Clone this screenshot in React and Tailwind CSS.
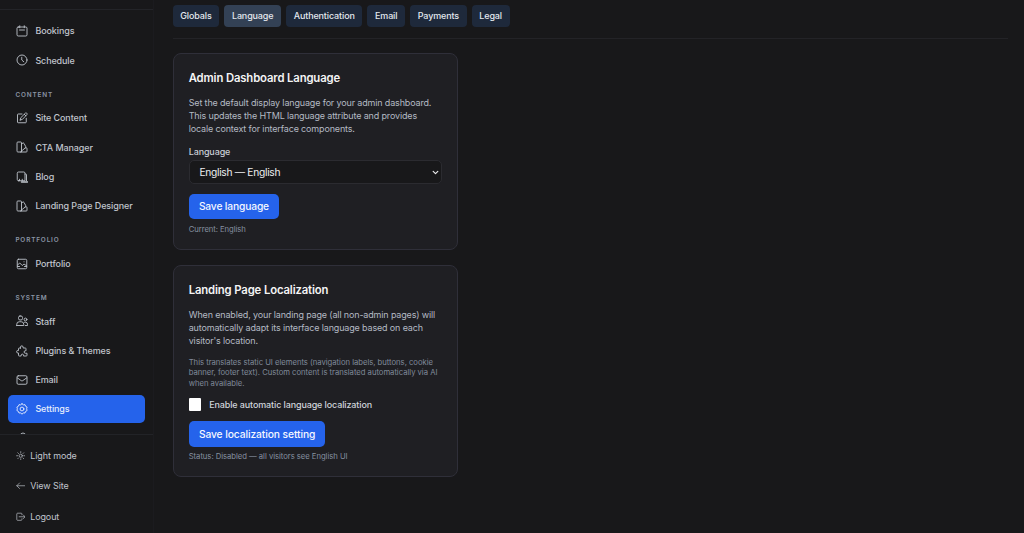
import React, { useState } from 'react';

// Shared wrapper for the line icons
const Icon = ({ children, className = 'size-[12px]', strokeWidth = 1.8 }) => (
  <svg
    viewBox="0 0 24 24"
    fill="none"
    stroke="currentColor"
    strokeWidth={strokeWidth}
    strokeLinecap="round"
    strokeLinejoin="round"
    className={`shrink-0 ${className}`}
  >
    {children}
  </svg>
);

const icons = {
  calendar: (
    <>
      <rect x="2" y="4" width="20" height="18" rx="2.5" />
      <path d="M7.5 1.5v4M16.5 1.5v4M7 10h10" />
    </>
  ),
  clock: (
    <>
      <circle cx="12" cy="12" r="10" />
      <path d="M11.5 6.5V12l4 3.5" />
    </>
  ),
  edit: (
    <>
      <path d="M12 4H4.5A1.5 1.5 0 0 0 3 5.5V20a1.5 1.5 0 0 0 1.5 1.5H19a1.5 1.5 0 0 0 1.5-1.5v-7.5" />
      <path d="m8.5 16 1-4.5L18.8 2.3a1.8 1.8 0 0 1 2.6 0l.4.4a1.8 1.8 0 0 1 0 2.6L12.8 14.8 8.5 16ZM16.5 4.5l3.2 3.2" />
    </>
  ),
  swatch: (
    <>
      <path d="M2 3.5A1.5 1.5 0 0 1 3.5 2h6A1.5 1.5 0 0 1 11 3.5V22H3.500A1.500 1.500 0 0 1 2 20.500Z" />
      <path d="M11 5.500 14 4.200a1.500 1.500 0 0 1 2 .6l3.600 6.700a1.500 1.500 0 0 1-.6 2L11 20" />
      <path d="M18.500 13.700h2A1.500 1.500 0 0 1 22 15.200v5.300a1.500 1.500 0 0 1-1.500 1.500H9" />
    </>
  ),
  blog: (
    <>
      <path d="M5 19.5A2.5 2.5 0 0 1 2.5 17V4.500A2.500 2.500 0 0 1 5 2h10.500A2.500 2.500 0 0 1 18 4.500v15H5Z" />
      <path d="M18 6h1.500A1.500 1.500 0 0 1 21 7.500v12M7 19.500v-3M12.500 19.500v-3" />
      <path d="M11 21.800h12" strokeWidth="3" />
    </>
  ),
  image: (
    <>
      <rect x="2.5" y="2.500" width="19" height="19" rx="2.500" />
      <path d="m3 14 4.500-4 5 5 3.500-3 5.500 4M16 7.500h.1M3 17h4M17 17h4" />
    </>
  ),
  users: (
    <>
      <rect x="5" y="2" width="8" height="8" rx="3" />
      <path d="M1.5 21v-2.500a5 5 0 0 1 5-5h4a5 5 0 0 1 5 5V21h-14Z" />
      <circle cx="19" cy="9" r="2.800" />
      <path d="M17 14.500h2a4 4 0 0 1 4 4V21h-4.500" />
    </>
  ),
  puzzle: (
    <path d="M9 6V4.300a2.600 2.600 0 0 1 5.200 0V6h4.300A1.500 1.500 0 0 1 20 7.500v4h-1.300a2.500 2.500 0 0 0 0 5H22V20.500a1.500 1.500 0 0 1-1.500 1.500H15v-1.500a2.300 2.300 0 0 0-4.600 0V22H6.500A1.500 1.500 0 0 1 5 20.500V16H3.700a2.500 2.500 0 0 1 0-5H5V7.500A1.500 1.500 0 0 1 6.500 6H9Z" />
  ),
  mail: (
    <>
      <rect x="2" y="3.500" width="20" height="17" rx="2.500" />
      <path d="m3 8 7.500 5.300a2.500 2.500 0 0 0 3 0L21 8" />
    </>
  ),
  cog: (
    <>
      <path d="m12 1.500 2.600 2.200 3.400-.4 1.200 3.200 3 1.600-.9 3.400.9 3.600-3 1.700-1.200 3.200-3.400-.3L12 22.500l-2.600-2.800-3.400.3-1.200-3.200-3-1.700.9-3.600-.9-3.400 3-1.600L6 3.300l3.400.4L12 1.500Z" />
      <circle cx="12" cy="12" r="3.800" />
    </>
  ),
  support: (
    <>
      <circle cx="14" cy="7" r="5" />
      <path d="M5 22a9 7 0 0 1 18 0" />
    </>
  ),
  sun: (
    <>
      <circle cx="12" cy="12" r="4" />
      <path d="M12 1.500v3M12 19.500v3M1.500 12h3M19.500 12h3M4.500 4.500l2 2M17.500 17.500l2 2M4.500 19.500l2-2M17.500 6.500l2-2" />
    </>
  ),
  back: <path d="M23 12H2M9 5l-7 7 7 7" />,
  logout: (
    <>
      <path d="M15 7V5a2 2 0 0 0-2-2H4a2 2 0 0 0-2 2v14a2 2 0 0 0 2 2h9a2 2 0 0 0 2-2v-2" />
      <path d="M8 12h15M18.500 7.500 23 12l-4.500 4.500" />
    </>
  ),
};

const navGroups = [
  {
    items: [
      { label: 'Bookings', icon: 'calendar' },
      { label: 'Schedule', icon: 'clock' },
    ],
  },
  {
    title: 'CONTENT',
    items: [
      { label: 'Site Content', icon: 'edit' },
      { label: 'CTA Manager', icon: 'swatch' },
      { label: 'Blog', icon: 'blog' },
      { label: 'Landing Page Designer', icon: 'swatch' },
    ],
  },
  { title: 'PORTFOLIO', items: [{ label: 'Portfolio', icon: 'image' }] },
  {
    title: 'SYSTEM',
    items: [
      { label: 'Staff', icon: 'users' },
      { label: 'Plugins & Themes', icon: 'puzzle' },
      { label: 'Email', icon: 'mail' },
      { label: 'Settings', icon: 'cog' },
      { label: '', icon: 'support' },
    ],
  },
];

const footerLinks = [
  { label: 'Light mode', icon: 'sun' },
  { label: 'View Site', icon: 'back' },
  { label: 'Logout', icon: 'logout' },
];

const tabs = ['Globals', 'Language', 'Authentication', 'Email', 'Payments', 'Legal'];

const Sidebar = () => (
  <aside className="flex h-full w-[154px] shrink-0 flex-col border-r border-[#1b1b1f]">
    <div className="h-[10px] shrink-0 border-b border-[#232428]" />
    <nav className="h-[424px] shrink-0 overflow-hidden px-[8px] pt-[7.200px]">
      {navGroups.map((group, i) => (
        <div key={i}>
          {group.title && (
            <h3 className="mb-[4px] pt-[15.500px] pl-[7.400px] text-[6.400px] leading-[10.200px] font-semibold tracking-[0.860px] text-[#8b95a5]">
              {group.title}
            </h3>
          )}
          <div className="flex flex-col gap-[1.250px]">
            {group.items.map((item) => (
              <a
                key={item.icon + item.label}
                className={`flex h-[28px] w-[136.600px] items-center gap-[7.700px] rounded-[5px] pl-[7.700px] text-[8.960px] font-medium tracking-[-0.090px] ${
                  item.label === 'Settings' ? 'bg-[#2563eb] text-[#e6edfd]' : 'text-[#c0c5cd]'
                }`}
              >
                <Icon>{icons[item.icon]}</Icon>
                {item.label}
              </a>
            ))}
          </div>
        </div>
      ))}
    </nav>
    <div className="flex flex-1 flex-col border-t border-[#222327] pt-[5px]">
      {footerLinks.map((link) => (
        <a
          key={link.label}
          className="flex h-[30.500px] shrink-0 items-center gap-[5px] pl-[15.700px] text-[8.960px] tracking-[-0.080px] text-[#c0c5cd]"
        >
          <Icon className="size-[9.500px]" strokeWidth={1.7}>{icons[link.icon]}</Icon>
          {link.label}
        </a>
      ))}
    </div>
  </aside>
);

const Card = ({ title, children }) => (
  <section className="flex w-[285.400px] flex-col items-start rounded-[8px] border border-[#2f2f39] bg-[#1f1f23] px-[15px] pt-[15.400px]">
    <h2 className="mb-[11.600px] text-[11.300px] leading-[16px] font-semibold tracking-[-0.130px] text-[#f4f4f5]">
      {title}
    </h2>
    {children}
  </section>
);

const Button = ({ text, className }) => (
  <button
    className={`h-[25.600px] rounded-[5px] bg-[#2563eb] px-[10.200px] pt-[1px] text-[10.240px] font-medium text-[#f5f8ff] ${className}`}
  >
    {text}
  </button>
);

const App = () => {
  const [activeTab, setActiveTab] = useState('Language');
  const [enabled, setEnabled] = useState(false);

  return (
    <div className="flex h-[533px] w-full overflow-hidden bg-[#18181a] font-['Inter',sans-serif] text-[#c6cbd3]">
      <Sidebar />
      <main className="flex flex-1 flex-col pt-[4.800px] pr-[16px] pl-[18.700px]">
        <div className="flex h-[34px] shrink-0 items-start gap-[5.100px] border-b border-[#232327]">
          {tabs.map((tab) => (
            <button
              key={tab}
              onClick={() => setActiveTab(tab)}
              className={`h-[22.400px] rounded-[4px] px-[7.600px] text-[8.960px] font-medium tracking-[-0.110px] text-[#e3e8ee] ${
                activeTab === tab ? 'bg-[#334155]' : 'bg-[#1e293b]'
              }`}
            >
              {tab}
            </button>
          ))}
        </div>

        <div className="flex flex-col gap-[15.400px] pt-[14.600px]">
          <Card title="Admin Dashboard Language">
            <p className="text-[8.960px] leading-[12.800px] tracking-[-0.130px] whitespace-nowrap text-[#b4bac4]">
              Set the default display language for your admin dashboard.
              <br />
              This updates the HTML language attribute and provides
              <br />
              locale context for interface components.
            </p>
            <label className="mt-[9.800px] text-[8.960px] leading-[12.800px] font-medium tracking-[-0.100px] text-[#c9ced6]">
              Language
            </label>
            <div className="mt-[1.800px] flex h-[24px] w-full items-center justify-between rounded-[5px] border border-[#2b2b30] bg-[#18181a] pt-[1px] pr-[2px] pl-[9.700px] text-[10.240px] tracking-[-0.290px] text-[#ededef]">
              English — English
              <Icon className="size-[7px]" strokeWidth={4}>
                <path d="m4 8 8 8 8-8" />
              </Icon>
            </div>
            <div className="mt-[9.600px] flex">
              <Button text="Save language" className="tracking-[-0.140px]" />
            </div>
            <p className="mt-[5.800px] mb-[13.600px] text-[7.680px] leading-[10.240px] tracking-[-0.050px] text-[#8690a0]">
              Current: English
            </p>
          </Card>

          <Card title="Landing Page Localization">
            <p className="text-[8.960px] leading-[12.800px] tracking-[-0.130px] whitespace-nowrap text-[#b4bac4]">
              When enabled, your landing page (all non-admin pages) will
              <br />
              automatically adapt its interface language based on each
              <br />
              visitor's location.
            </p>
            <p className="mt-[10.500px] text-[7.680px] leading-[10.240px] tracking-[-0.020px] whitespace-nowrap text-[#808a9a]">
              This translates static UI elements (navigation labels, buttons, cookie
              <br />
              banner, footer text). Custom content is translated automatically via AI
              <br />
              when available.
            </p>
            <label className="mt-[9px] flex h-[13px] items-center gap-[7.700px] text-[8.960px] font-medium tracking-[-0.100px] text-[#d0d4db]">
              <input
                type="checkbox"
                checked={enabled}
                onChange={(e) => setEnabled(e.target.checked)}
                className="size-[12.800px] appearance-none rounded-[1px] bg-white checked:bg-[#2563eb]"
              />
              Enable automatic language localization
            </label>
            <div className="mt-[10px] flex">
              <Button text="Save localization setting" className="tracking-[-0.080px]" />
            </div>
            <p className="mt-[5.300px] mb-[14px] text-[7.680px] leading-[10.240px] tracking-[-0.030px] text-[#8690a0]">
              Status: Disabled — all visitors see English UI
            </p>
          </Card>
        </div>
      </main>
    </div>
  );
};

export default App;
